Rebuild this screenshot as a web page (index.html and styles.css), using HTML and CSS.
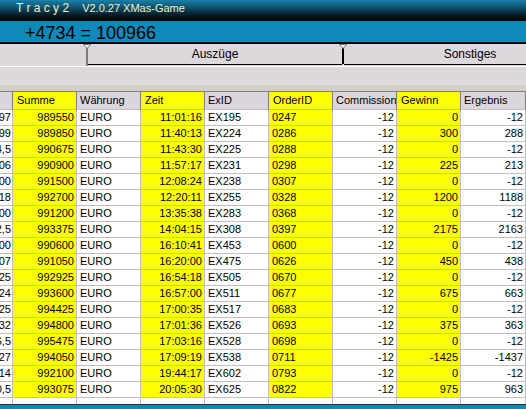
FILE: index.html
```html
<!DOCTYPE html>
<html>
<head>
<meta charset="utf-8">
<link rel="stylesheet" href="styles.css">
</head>
<body>
<div class="app">
  <div class="titlebar"><span class="appname">T r a c y 2</span><span class="version">V2.0.27 XMas-Game</span></div>
  <div class="scorebar">+4734 = 100966</div>
  <div class="tabrow">
    <div class="tab-blank"></div>
    <div class="sep sep-gray"><svg class="marker" width="8" height="5" viewBox="0 0 8 5"><polygon points="0.5,0.5 7.5,0.5 4,4.5" fill="#f4f4f4" stroke="#808080" stroke-width="1"/></svg></div>
    <div class="tab">Auszüge</div>
    <div class="sep sep-black"><svg class="marker" width="8" height="5" viewBox="0 0 8 5"><polygon points="0.5,0.5 7.5,0.5 4,4.5" fill="#f4f4f4" stroke="#808080" stroke-width="1"/></svg></div>
    <div class="tab">Sonstiges</div>
    <div class="tab tab-rest"></div>
  </div>
  <div class="toolarea"></div>
  <div class="band"></div>
  <div class="grid">
    <div class="row head">
      <div class="c"></div>
      <div class="c y">Summe</div>
      <div class="c">Währung</div>
      <div class="c y">Zeit</div>
      <div class="c">ExID</div>
      <div class="c y">OrderID</div>
      <div class="c">Commissions</div>
      <div class="c y">Gewinn</div>
      <div class="c">Ergebnis</div>
    </div>
    <div class="row"><div class="c r">97</div><div class="c y r">989550</div><div class="c">EURO</div><div class="c y r">11:01:16</div><div class="c">EX195</div><div class="c y">0247</div><div class="c r">-12</div><div class="c y r">0</div><div class="c r">-12</div></div>
    <div class="row"><div class="c r">99</div><div class="c y r">989850</div><div class="c">EURO</div><div class="c y r">11:40:13</div><div class="c">EX224</div><div class="c y">0286</div><div class="c r">-12</div><div class="c y r">300</div><div class="c r">288</div></div>
    <div class="row"><div class="c r">4,5</div><div class="c y r">990675</div><div class="c">EURO</div><div class="c y r">11:43:30</div><div class="c">EX225</div><div class="c y">0288</div><div class="c r">-12</div><div class="c y r">0</div><div class="c r">-12</div></div>
    <div class="row"><div class="c r">06</div><div class="c y r">990900</div><div class="c">EURO</div><div class="c y r">11:57:17</div><div class="c">EX231</div><div class="c y">0298</div><div class="c r">-12</div><div class="c y r">225</div><div class="c r">213</div></div>
    <div class="row"><div class="c r">00</div><div class="c y r">991500</div><div class="c">EURO</div><div class="c y r">12:08:24</div><div class="c">EX238</div><div class="c y">0307</div><div class="c r">-12</div><div class="c y r">0</div><div class="c r">-12</div></div>
    <div class="row"><div class="c r">18</div><div class="c y r">992700</div><div class="c">EURO</div><div class="c y r">12:20:11</div><div class="c">EX255</div><div class="c y">0328</div><div class="c r">-12</div><div class="c y r">1200</div><div class="c r">1188</div></div>
    <div class="row"><div class="c r">00</div><div class="c y r">991200</div><div class="c">EURO</div><div class="c y r">13:35:38</div><div class="c">EX283</div><div class="c y">0368</div><div class="c r">-12</div><div class="c y r">0</div><div class="c r">-12</div></div>
    <div class="row"><div class="c r">2,5</div><div class="c y r">993375</div><div class="c">EURO</div><div class="c y r">14:04:15</div><div class="c">EX308</div><div class="c y">0397</div><div class="c r">-12</div><div class="c y r">2175</div><div class="c r">2163</div></div>
    <div class="row"><div class="c r">00</div><div class="c y r">990600</div><div class="c">EURO</div><div class="c y r">16:10:41</div><div class="c">EX453</div><div class="c y">0600</div><div class="c r">-12</div><div class="c y r">0</div><div class="c r">-12</div></div>
    <div class="row"><div class="c r">07</div><div class="c y r">991050</div><div class="c">EURO</div><div class="c y r">16:20:00</div><div class="c">EX475</div><div class="c y">0626</div><div class="c r">-12</div><div class="c y r">450</div><div class="c r">438</div></div>
    <div class="row"><div class="c r">25</div><div class="c y r">992925</div><div class="c">EURO</div><div class="c y r">16:54:18</div><div class="c">EX505</div><div class="c y">0670</div><div class="c r">-12</div><div class="c y r">0</div><div class="c r">-12</div></div>
    <div class="row"><div class="c r">24</div><div class="c y r">993600</div><div class="c">EURO</div><div class="c y r">16:57:00</div><div class="c">EX511</div><div class="c y">0677</div><div class="c r">-12</div><div class="c y r">675</div><div class="c r">663</div></div>
    <div class="row"><div class="c r">25</div><div class="c y r">994425</div><div class="c">EURO</div><div class="c y r">17:00:35</div><div class="c">EX517</div><div class="c y">0683</div><div class="c r">-12</div><div class="c y r">0</div><div class="c r">-12</div></div>
    <div class="row"><div class="c r">32</div><div class="c y r">994800</div><div class="c">EURO</div><div class="c y r">17:01:36</div><div class="c">EX526</div><div class="c y">0693</div><div class="c r">-12</div><div class="c y r">375</div><div class="c r">363</div></div>
    <div class="row"><div class="c r">6,5</div><div class="c y r">995475</div><div class="c">EURO</div><div class="c y r">17:03:16</div><div class="c">EX528</div><div class="c y">0698</div><div class="c r">-12</div><div class="c y r">0</div><div class="c r">-12</div></div>
    <div class="row"><div class="c r">27</div><div class="c y r">994050</div><div class="c">EURO</div><div class="c y r">17:09:19</div><div class="c">EX538</div><div class="c y">0711</div><div class="c r">-12</div><div class="c y r">-1425</div><div class="c r">-1437</div></div>
    <div class="row"><div class="c r">14</div><div class="c y r">992100</div><div class="c">EURO</div><div class="c y r">19:44:17</div><div class="c">EX602</div><div class="c y">0793</div><div class="c r">-12</div><div class="c y r">0</div><div class="c r">-12</div></div>
    <div class="row"><div class="c r">0,5</div><div class="c y r">993075</div><div class="c">EURO</div><div class="c y r">20:05:30</div><div class="c">EX625</div><div class="c y">0822</div><div class="c r">-12</div><div class="c y r">975</div><div class="c r">963</div></div>
    <div class="row"><div class="c"></div><div class="c"></div><div class="c"></div><div class="c"></div><div class="c"></div><div class="c"></div><div class="c"></div><div class="c"></div><div class="c"></div></div>
  </div>
  <div class="footer"></div>
</div>
</body>
</html>
```
FILE: styles.css
```css
html, body {
  margin: 0;
  padding: 0;
}
body {
  width: 526px;
  height: 409px;
  overflow: hidden;
  background: #dcd8dc;
  font-family: "Liberation Sans", Arial, sans-serif;
  font-size: 11px;
  color: #000;
}
.app {
  display: flex;
  flex-direction: column;
  height: 409px;
}
.titlebar {
  height: 21px;
  flex: none;
  background: linear-gradient(to bottom, #1a80a8 0%, #12607f 25%, #0a3446 55%, #020a0e 85%, #000 100%);
  color: #f4f0c4;
  line-height: 17px;
  white-space: pre;
  font-size: 12px;
}
.appname {
  margin-left: 16px;
}
.version {
  margin-left: 13px;
  font-size: 11px;
}
.scorebar {
  height: 21px;
  flex: none;
  background: #1089b8;
  border-bottom: 2px solid #000;
  font-size: 18px;
  line-height: 25px;
  padding-left: 25px;
  overflow: hidden;
}
.tabrow {
  height: 22px;
  flex: none;
  display: flex;
  align-items: flex-start;
  border-bottom: 1px solid #fff;
  background: #dcd8dc;
}
.tab-blank {
  width: 86px;
  flex: none;
}
.sep {
  position: relative;
  width: 2px;
  flex: none;
  margin-top: 4px;
}
.sep-gray {
  height: 18px;
  background: #7c7c7c;
}
.sep-black {
  height: 16px;
  background: #000;
}
.marker {
  position: absolute;
  top: -4px;
  left: -3px;
  display: block;
}
.tab {
  width: 254px;
  flex: none;
  height: 21px;
  box-sizing: border-box;
  border-bottom: 1px solid #000;
  text-align: center;
  line-height: 21px;
  font-size: 12px;
}
.tab + .sep + .tab {
  width: 252px;
}
.tab-rest {
  flex: 1;
  width: auto;
}
.toolarea {
  height: 18px;
  flex: none;
}
.band {
  height: 6px;
  flex: none;
  background: #d4d0c8;
}
.grid {
  flex: 1;
  overflow: hidden;
  border-top: 1px solid #808080;
  background: #fff;
}
.row {
  display: grid;
  grid-template-columns: 13px repeat(7, 64px) 65px;
  height: 16px;
}
.c {
  box-sizing: border-box;
  background: #fff;
  border-bottom: 1px solid #c0c0c0;
  border-right: 1px solid #c0c0c0;
  line-height: 15px;
  padding: 0 2px 0 3px;
  white-space: nowrap;
  overflow: hidden;
}
.c:first-child {
  padding: 0 1px 0 0;
}
.c.y {
  background: #ffff00;
}
.c.r {
  display: flex;
  justify-content: flex-end;
}
.row.head {
  height: 18px;
}
.head .c {
  background: #dad6dc;
  border-right-color: #808080;
  line-height: 17px;
  padding-left: 3px;
}
.head .c.y {
  background: #ffff00;
  padding-left: 4px;
}
.footer {
  height: 4px;
  flex: none;
  border-top: 1px solid #303030;
  background: #1089b8;
}
```
